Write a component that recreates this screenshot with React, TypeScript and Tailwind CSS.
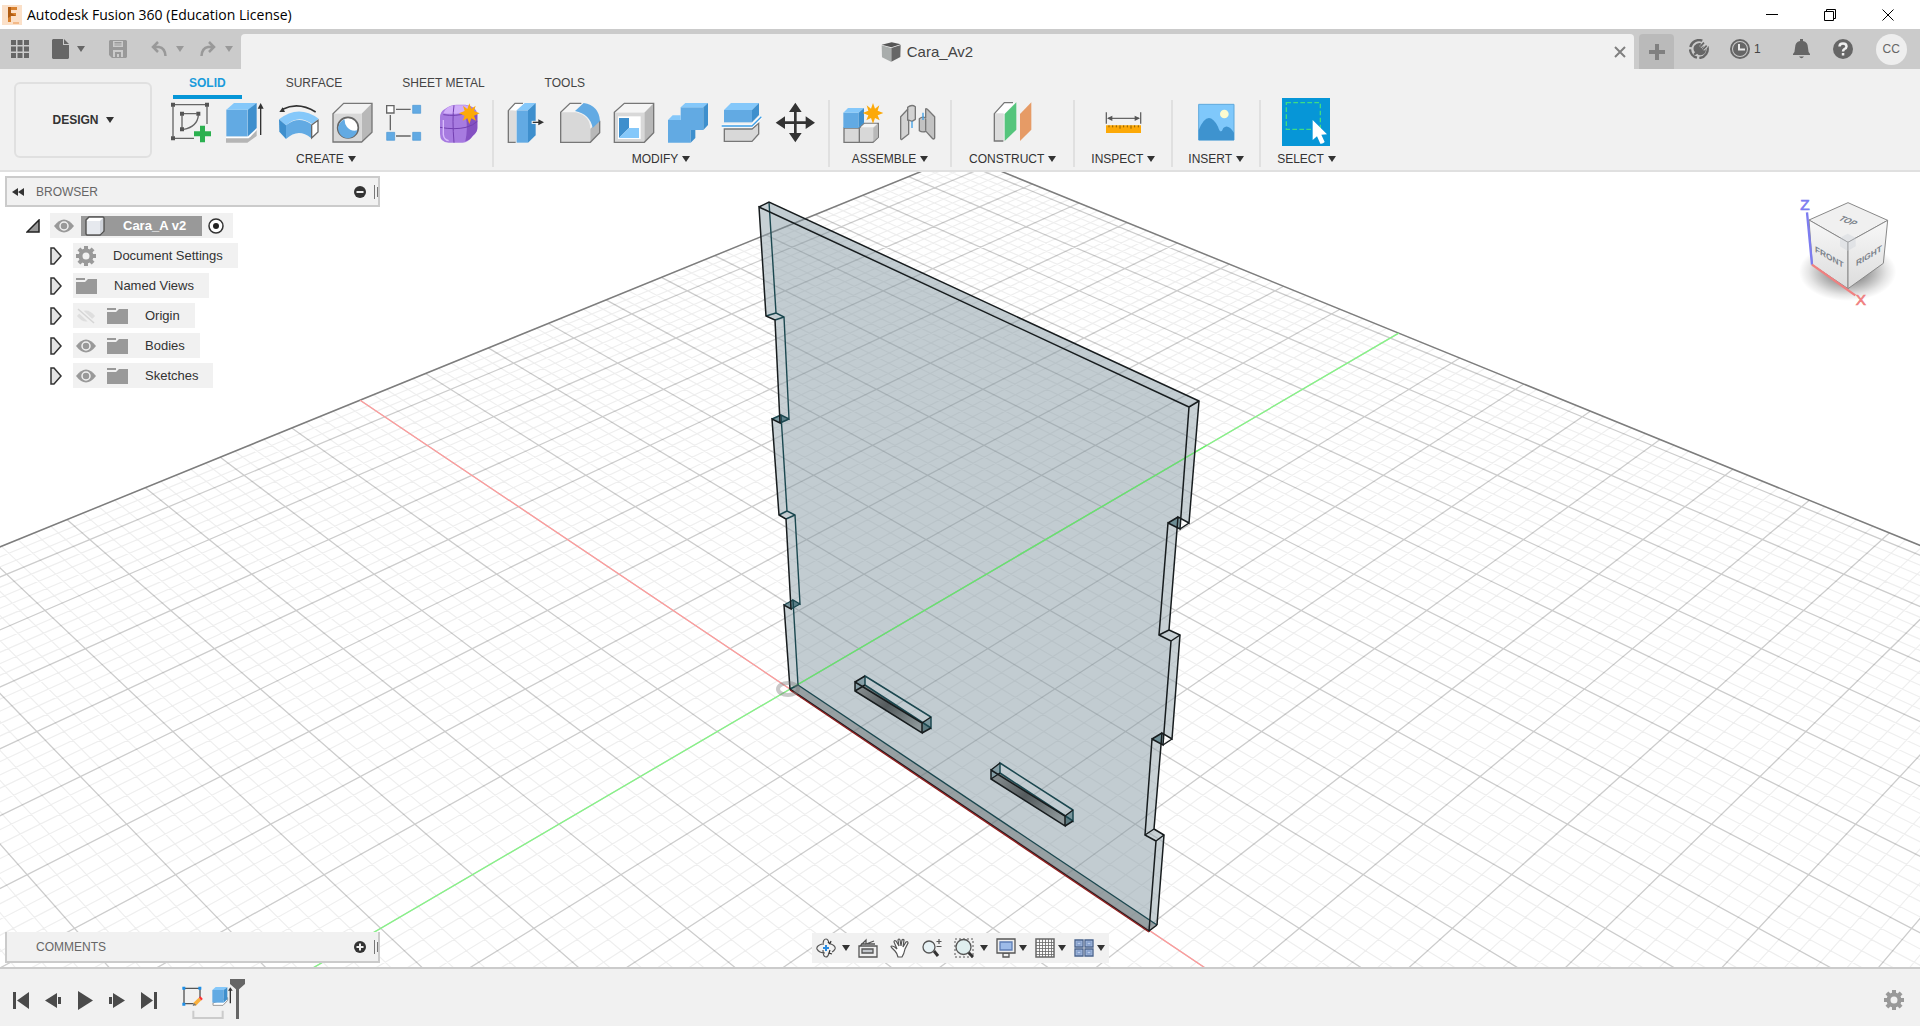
import { useState, type ReactNode } from "react";

/* ---------- small shared pieces ---------- */

function Caret({ className = "fill-[#333]" }: { className?: string }) {
  return (
    <svg width="8" height="6" viewBox="0 0 8 6" className={className} aria-hidden="true">
      <path d="M0 0h8L4 6z" />
    </svg>
  );
}

function Glyph({ box, w = 44, h = 44, children }: { box: string; w?: number; h?: number; children: ReactNode }) {
  return (
    <svg width={w} height={h} viewBox={box} className="shrink-0" aria-hidden="true">
      {children}
    </svg>
  );
}

/* ---------- ribbon icons (3 units per pixel) ---------- */

const STAR = "M0-31 6-14 19-24 14-8 31-1 14 6 20 21 6 14 0 31-6 14-20 21-14 6-31-1-14-8-19-24-6-14Z";

const createIcons = [
  {
    name: "Create Sketch",
    el: (
      <Glyph box="507 300 132 132">
        <g fill="none" stroke="#666" strokeWidth="4">
          <path d="M524 314H616M519 319V410M524 415H582M621 319V372M550 341H590M546 346V384M595 346Q592 380 551 388" />
        </g>
        <g fill="#555">
          <path d="M513 308h12v12h-12zM615 308h12v12h-12zM513 409h12v12h-12zM540 335h12v12h-12zM589 335h12v12h-12zM540 382h12v12h-12z" />
        </g>
        <path fill="#2bb04f" d="M600 377h15v17h18v15h-18v18h-15v-18h-18v-15h18z" />
      </Glyph>
    ),
  },
  {
    name: "Extrude",
    el: (
      <Glyph box="669 300 132 132">
        <path fill="#b5b5b5" d="M678 412h72l20-24v20l-28 20h-64z" />
        <path fill="#fff" d="M678 410h66l26-24v5l-24 24h-68z" />
        <path fill="#62aae3" d="M679 329h64v80h-64z" />
        <path fill="#85c8fa" d="M679 329l23-20h68l-23 20z" />
        <path fill="#3e8fcd" d="M744 329l26-20v75l-26 25z" />
        <path d="M782 405V318" stroke="#333" strokeWidth="4" />
        <path fill="#333" d="M782 309l9 17h-18z" />
      </Glyph>
    ),
  },
  {
    name: "Revolve",
    el: (
      <Glyph box="831 300 132 132">
        <path d="M848 328Q895 304 947 336" fill="none" stroke="#333" strokeWidth="5" />
        <path fill="#333" d="M838 336l10-14 7 14z" />
        <path fill="#85c8fa" d="M837 358Q895 312 956 356L936 372Q895 342 858 376Z" />
        <path fill="#3e8fcd" d="M837 358l21 18v41l-20-22z" />
        <path fill="#62aae3" d="M858 376Q895 346 933 372V414Q895 382 858 417Z" />
        <path fill="#fff" stroke="#666" strokeWidth="4" d="M935 375l19-14v35l-19 18z" />
      </Glyph>
    ),
  },
  {
    name: "Hole",
    el: (
      <Glyph box="993 300 132 132">
        <path fill="#f2f2f2" d="M999 341l32-31h85l-31 31z" />
        <path fill="#b8b8b8" d="M1085 341l31-31v87l-31 30z" />
        <path fill="#d8d8d8" d="M999 341h86v86h-86z" />
        <path fill="none" stroke="#777" strokeWidth="4" d="M999 426V341l32-31h85v87l-31 29z" />
        <circle cx="1044" cy="383" r="31" fill="#fff" stroke="#666" strokeWidth="5" />
        <path fill="#62aae3" d="M1034 358a29 29 0 1 0 38 33q-20 4-31-10-8-10-7-23z" />
      </Glyph>
    ),
  },
  {
    name: "Rectangular Pattern",
    el: (
      <Glyph box="1155 300 132 132">
        <path d="M1188 328h44M1171 345v46M1188 408h44" stroke="#666" strokeWidth="4" />
        <path fill="#fff" stroke="#666" strokeWidth="4" d="M1160 317h22v22h-22z" />
        <path fill="#62aae3" stroke="#4b97d4" strokeWidth="2" d="M1238 316h24v24h-24zM1160 397h24v24h-24zM1238 397h24v24h-24z" />
      </Glyph>
    ),
  },
  {
    name: "Create Form",
    el: (
      <Glyph box="1317 300 132 132">
        <path fill="#a77be0" d="M1320 352q0-18 16-26 16-12 34-12h26q34 4 36 30v40q0 14-14 24-14 20-30 20h-42q-26 0-26-26z" />
        <path fill="#d0adf9" d="M1330 340q8-22 36-24h30q12 2 14 10l-24 12q-30 6-56 2z" />
        <path fill="#8451c2" d="M1398 350q14-12 34-8v42q0 12-12 22-12 16-24 18 8-36 2-74z" />
        <path d="M1320 382q44 8 78 0 22-6 34-18M1362 316q-6 40 0 112M1330 344q38 6 66-4" fill="none" stroke="#7340b1" strokeWidth="3" />
        <path d="M1330 360v44q2 16 16 18" fill="none" stroke="#d9bcfb" strokeWidth="4" />
        <path d={STAR} transform="translate(1408 341)" fill="#fca908" />
      </Glyph>
    ),
  },
];

const modifyIcons = [
  {
    name: "Press Pull",
    el: (
      <Glyph box="75 120 132 132">
        <path fill="#dcdcdc" d="M88 153l24-6v100H88z" />
        <path fill="#fff" d="M90 150l20-20h28l-26 22z" />
        <path fill="none" stroke="#777" strokeWidth="4" d="M110 247H88v-95l20-22h24" />
        <path fill="#62aae3" d="M113 151h34v97h-34z" />
        <path fill="#85c8fa" d="M113 151l24-22h33l-23 22z" />
        <path fill="#3e8fcd" d="M147 151l23-22v97l-23 22z" />
        <path stroke="#fff" strokeWidth="9" d="M158 187h22" />
        <path stroke="#333" strokeWidth="4" d="M161 187h22" />
        <path fill="#333" d="M195 187l-17-9v18z" />
      </Glyph>
    ),
  },
  {
    name: "Fillet",
    el: (
      <Glyph box="237 120 132 132">
        <path fill="#f5f5f5" d="M245 158l28-28h42l-24 26z" />
        <path fill="#d8d8d8" d="M245 157h45q44 10 44 52v38h-89z" />
        <path fill="#b8b8b8" d="M334 206l28-24v36l-28 29z" />
        <path fill="none" stroke="#777" strokeWidth="4" d="M307 130h-34l-28 27v90h89l28-29v-36" />
        <path fill="#62aae3" d="M288 153l26-24q46 8 49 54l-22 21q-8-42-53-51z" />
      </Glyph>
    ),
  },
  {
    name: "Shell",
    el: (
      <Glyph box="399 120 132 132">
        <path fill="#f5f5f5" d="M406 158l30-28h88l-28 28z" />
        <path fill="#b8b8b8" d="M496 158l28-28v88l-28 29z" />
        <path fill="#d8d8d8" d="M406 158h90v89h-90z" />
        <path fill="none" stroke="#777" strokeWidth="4" d="M406 247v-90l30-27h88v88l-28 29z" />
        <path fill="#fff" d="M417 169h68v68h-68z" />
        <path fill="#3e8fcd" d="M420 174h30v30l-30 30z" />
        <path fill="#85c8fa" d="M450 204h30v30h-60z" />
      </Glyph>
    ),
  },
  {
    name: "Combine",
    el: (
      <Glyph box="561 120 132 132">
        <path fill="#62aae3" d="M567 180h38v-38h68v68h-38v38h-68z" />
        <path fill="#85c8fa" d="M567 180l14-14h24v14zM605 142l14-13h68l-14 13z" />
        <path fill="#3e8fcd" d="M673 142l14-13v66l-14 15zM635 210h14v24l-14 14z" />
      </Glyph>
    ),
  },
  {
    name: "Split Body",
    el: (
      <Glyph box="723 120 132 132">
        <path fill="#62aae3" d="M735 150h84v37h-84z" />
        <path fill="#85c8fa" d="M735 150l21-21h84l-21 21z" />
        <path fill="#3e8fcd" d="M819 150l21-21v36l-21 22z" />
        <path fill="#d8d8d8" stroke="#777" strokeWidth="4" d="M736 207v37h83l20-22v-32l-20 17z" />
        <path fill="none" stroke="#fff" strokeWidth="9" d="M728 198h91l28-28" />
        <path fill="none" stroke="#3f9fe6" strokeWidth="4" d="M728 198h91l28-28" />
      </Glyph>
    ),
  },
  {
    name: "Move/Copy",
    el: (
      <Glyph box="885 120 132 132">
        <path stroke="#333" strokeWidth="8" d="M949 145v84M907 188h84" />
        <path fill="#333" d="M949 128l19 28h-38zM949 247l19-28h-38zM890 188l28-19v38zM1008 188l-28-19v38z" />
      </Glyph>
    ),
  },
];

const assembleIcons = [
  {
    name: "New Component",
    el: (
      <Glyph box="1083 120 132 132">
        <path fill="#d8d8d8" stroke="#777" strokeWidth="4" d="M1092 204h46v43h-46zM1138 204l14-14h43v42l-16 15h-41z" />
        <path fill="#f5f5f5" d="M1142 202l12-11h38l-12 11z" />
        <path fill="#b8b8b8" d="M1180 204l13-12v40l-13 13z" />
        <path fill="#62aae3" d="M1090 158h46v46h-46z" />
        <path fill="#85c8fa" d="M1090 158l14-14h48l-16 14z" />
        <path fill="#3e8fcd" d="M1136 158l16-14v44l-16 16z" />
        <path d={STAR} transform="translate(1179 160)" fill="#fca908" />
      </Glyph>
    ),
  },
  {
    name: "Joint",
    el: (
      <Glyph box="1245 120 132 132">
        <g fill="#d3d3d3" stroke="#777" strokeWidth="4" strokeLinejoin="round">
          <path d="M1262 170l21-22v-6q12-10 23-2v38l-10 6-10-4v42l-20 16q-5 2-4-6z" />
          <path fill="#c2c2c2" d="M1318 176q10-8 19-2v-26q0-4 5 0l22 22v64q-2 6-8 0l-18-20q-12 4-20-2z" />
        </g>
        <path d="M1283 146v36M1337 176v36" stroke="#777" strokeWidth="4" />
        <path d="M1296 184v20M1329 158v22" stroke="#3f9fe6" strokeWidth="4" />
      </Glyph>
    ),
  },
];

const constructIcons = [
  {
    name: "Offset Plane",
    el: (
      <Glyph box="513 210 132 132">
        <path fill="#fff" d="M523 250l28-32h34l-32 34z" />
        <path fill="#dcdcdc" d="M523 250h28v83h-28z" />
        <path fill="none" stroke="#777" strokeWidth="4" d="M550 333h-27v-82l30-33h26" />
        <path fill="#55c57c" d="M554 252l35-35v82l-35 34z" />
        <path fill="#e69b66" d="M600 252l34-35v82l-34 34z" />
      </Glyph>
    ),
  },
];

const inspectIcons = [
  {
    name: "Measure",
    el: (
      <Glyph box="844 210 132 132">
        <path d="M860 247v34M963 247v34M866 265h92" stroke="#666" strokeWidth="4" />
        <path fill="#555" d="M862 265l16-8v16zM961 265l-16-8v16z" />
        <path fill="#fca908" d="M859 286h105v23H859z" />
        <path stroke="#8b5d00" strokeWidth="3" d="M868 286v6M879 286v6M890 286v6M901 286v10M912 286v6M923 286v6M934 286v10M945 286v6M956 286v6" />
      </Glyph>
    ),
  },
];

const insertIcons = [
  {
    name: "Insert Canvas",
    el: (
      <Glyph box="1120 210 132 132">
        <path fill="#7fc8fb" stroke="#5fa9dc" strokeWidth="3" d="M1134 223h106v107h-106z" />
        <circle cx="1211" cy="252" r="13" fill="#fdfbcf" />
        <path fill="#3e93cf" d="M1134 300q28-66 58-10 8 26 16 4 14-14 32 14v23h-106z" />
      </Glyph>
    ),
  },
];

const selectIcons = [
  {
    name: "Select",
    el: (
      <span className="flex h-12 w-12 items-center justify-center bg-[#0696d7]">
        <svg width="48" height="48" viewBox="0 0 144 144" aria-hidden="true">
          <path d="M13 14h102v80H13z" fill="none" stroke="#3fdc84" strokeWidth="4" strokeDasharray="14 7" />
          <path fill="#fff" d="M92 66v60l13-11 10 22q8 1 13-5l-10-22 17-1z" />
        </svg>
      </span>
    ),
  },
];

const GROUPS = [
  { label: "CREATE", icons: createIcons, pad: "px-1" },
  { label: "MODIFY", icons: modifyIcons, pad: "px-[5px]" },
  { label: "ASSEMBLE", icons: assembleIcons, pad: "px-[6px]" },
  { label: "CONSTRUCT", icons: constructIcons, pad: "px-[17px]" },
  { label: "INSPECT", icons: inspectIcons, pad: "px-4" },
  { label: "INSERT", icons: insertIcons, pad: "px-[15px]" },
  { label: "SELECT", icons: selectIcons, pad: "px-4" },
];

const TABS = ["SOLID", "SURFACE", "SHEET METAL", "TOOLS"];

/* ---------- header ---------- */

function TitleBar() {
  return (
    <header className="flex h-[29px] items-center bg-white">
      <div className="flex flex-1 items-center gap-[5px] pl-[2px]">
        <svg width="20" height="20" viewBox="0 0 20 20" aria-hidden="true">
          <path fill="#fbe0c8" d="M0 0h20v20H0z" />
          <path fill="#d9822f" d="M6 2h9v3H9v3h5v3H9v6H6z" />
          <path fill="#b05c12" d="M6 2h3v9l-3 2zM9 8l5 3H9z" />
          <path fill="#f3b988" d="M11 17h6v2h-6z" />
        </svg>
        <h1 className="font-['Open_Sans',sans-serif] text-[14px] leading-5 text-black">
          Autodesk Fusion 360 (Education License)
        </h1>
      </div>
      <div className="flex gap-[34px] pr-[20px]">
        {[
          { name: "Minimize", d: "M6 9.5h12" },
          { name: "Restore", d: "M6.500 6.500h9v9h-9zM8.500 6V4.500h9v9H16" },
          { name: "Close", d: "M6.500 4.500l11 11M17.500 4.500l-11 11" },
        ].map((b) => (
          <button key={b.name} aria-label={b.name} className="h-5 w-6">
            <svg width="24" height="20" viewBox="0 0 24 20" fill="none" stroke="#000" aria-hidden="true">
              <path d={b.d} />
            </svg>
          </button>
        ))}
      </div>
    </header>
  );
}

function QuickBar() {
  return (
    <div className="flex h-10 bg-[#cbcbcb]">
      <div className="flex w-[241px] shrink-0 items-center pl-[11px]">
        <button aria-label="Data panel" className="mr-[23px]">
          <svg width="18" height="18" viewBox="0 0 18 18" fill="#666" aria-hidden="true">
            <path d="M0 0h5v5H0zM6.500 0h5v5h-5zM13 0h5v5h-5zM0 6.500h5v5H0zM6.500 6.500h5v5h-5zM13 6.500h5v5h-5zM0 13h5v5H0zM6.500 13h5v5h-5zM13 13h5v5h-5z" />
          </svg>
        </button>
        <button aria-label="File" className="mr-6 flex items-center gap-2">
          <svg width="17" height="20" viewBox="0 0 17 20" fill="#666" aria-hidden="true">
            <path d="M1 0h10v6h6v13l-1 1H1l-1-1V1zM12 0l5 5h-5z" />
          </svg>
          <Caret className="fill-[#666]" />
        </button>
        <button aria-label="Save" className="mr-6">
          <svg width="18" height="18" viewBox="0 0 18 18" fill="#999" aria-hidden="true">
            <path fillRule="evenodd" d="M1 0h16l1 1v16l-1 1H3l-3-3V1zM4 1v6h10V1zM4 10v7h10v-7z" />
            <path d="M5.500 2h7v1.500h-7zM5.500 4.500h7v1h-7zM6 12h6v5h-2v-3H8v3H6z" />
          </svg>
        </button>
        <button aria-label="Undo" className="mr-4 flex items-center gap-[9px]">
          <svg width="16" height="16" viewBox="0 0 16 16" fill="none" stroke="#999" strokeWidth="2.500" aria-hidden="true">
            <path d="M7 1L2 6l5 5M2 6h6q6 1 6.500 9" />
          </svg>
          <Caret className="fill-[#999]" />
        </button>
        <button aria-label="Redo" className="flex items-center gap-[9px]">
          <svg width="16" height="16" viewBox="0 0 16 16" fill="none" stroke="#999" strokeWidth="2.500" aria-hidden="true">
            <path d="M9 1l5 5-5 5M14 6H8Q2 7 1.500 15" />
          </svg>
          <Caret className="fill-[#999]" />
        </button>
      </div>

      <div className="mt-[5px] flex flex-1 items-center rounded-t bg-[#f1f1f1] pr-[7px]">
        <div className="flex flex-1 items-center justify-center gap-[6px]">
          <svg width="20" height="20" viewBox="0 0 60 60" aria-hidden="true">
            <path fill="#555" d="M2 8L32 1l27 6-28 9z" />
            <path fill="#a9adac" d="M2 10l28 8v41L3 46z" />
            <path fill="#666" d="M31 18L59 9l-1 36-27 14z" />
          </svg>
          <span className="text-[15px] leading-5 text-[#444]">Cara_Av2</span>
        </div>
        <button aria-label="Close document" className="p-px">
          <svg width="12" height="12" viewBox="0 0 12 12" stroke="#808080" strokeWidth="2" aria-hidden="true">
            <path d="M1 1l10 10M11 1L1 11" />
          </svg>
        </button>
      </div>

      <button aria-label="New document" className="mt-[5px] ml-[5px] flex w-[35px] items-center justify-center rounded-t bg-[#bababa]">
        <svg width="16" height="16" viewBox="0 0 16 16" fill="#808080" aria-hidden="true">
          <path d="M6 0h4v6h6v4h-6v6H6v-6H0V6h6z" />
        </svg>
      </button>

      <div className="flex w-[246px] shrink-0 items-center pl-[15px]">
        <button aria-label="Extensions" className="mr-[21px]">
          <svg width="20" height="20" viewBox="0 0 60 60" aria-hidden="true">
            <path d="M40 5A27 27 0 0 0 4 24M3 31A27 27 0 0 0 24 56M31 57A27 27 0 0 0 55 22" fill="none" stroke="#666" strokeWidth="7" />
            <path fill="#666" d="M16 20q8-10 18-8l16 18q2 10-6 16-12 6-20-2-2 4-8 4l-2-4 4-4q-8-10-2-20z" />
            <path d="M34 24l12-13M42 32L55 20" stroke="#cbcbcb" strokeWidth="9" />
            <path d="M34 23l11-12M42 31L53 20" stroke="#666" strokeWidth="5" />
          </svg>
        </button>
        <button aria-label="Job status: 1" className="mr-8 flex items-center gap-1 text-[12px] leading-5 text-[#444]">
          <svg width="20" height="20" viewBox="0 0 20 20" aria-hidden="true">
            <circle cx="10" cy="10" r="9" fill="none" stroke="#666" strokeWidth="2" />
            <circle cx="10" cy="10" r="7" fill="#666" />
            <path d="M9 5v5.500h6" fill="none" stroke="#e8e8e8" strokeWidth="2" />
          </svg>
          1
        </button>
        <button aria-label="Notifications" className="mr-[23px]">
          <svg width="17" height="20" viewBox="0 0 17 20" fill="#666" aria-hidden="true">
            <path d="M7 0h3v2q5 1 5 7 0 4 2 6v1H0v-1q2-2 2-6 0-6 5-7zM6 17.500h5q-2.500 3.500-5 0z" />
          </svg>
        </button>
        <button aria-label="Help" className="mr-[23px]">
          <svg width="20" height="20" viewBox="0 0 20 20" aria-hidden="true">
            <circle cx="10" cy="10" r="10" fill="#666" />
            <path d="M6.500 7.500Q6.500 4.500 10 4.500t3.500 3q0 1.500-2 2.500-1.500 1-1.500 2.500" fill="none" stroke="#eee" strokeWidth="2.500" />
            <path fill="#eee" d="M8.800 14h2.500v2.500H8.800z" />
          </svg>
        </button>
        <button aria-label="Account CC" className="flex h-[31px] w-[31px] items-center justify-center rounded-full bg-[#eee] text-[12px] leading-4 text-[#666]">
          CC
        </button>
      </div>
    </div>
  );
}

function Ribbon() {
  const [active, setActive] = useState("SOLID");
  return (
    <div className="flex h-[103px] border-b-2 border-[#e0e0e0] bg-[#f1f1f1]">
      <button className="mt-[13px] ml-[14px] flex h-[76px] w-[138px] shrink-0 items-center justify-center gap-[7px] rounded-md border-2 border-[#e0e0e0] text-[12px] font-bold leading-4 text-[#333]">
        DESIGN <Caret />
      </button>
      <div className="ml-2 min-w-0 flex-1">
        <nav className="flex gap-7 pl-[13px]">
          {TABS.map((t) => (
            <button
              key={t}
              onClick={() => setActive(t)}
              className={`h-[30px] border-b-4 px-4 pt-[2px] text-[12px] leading-4 ${
                active === t ? "border-[#0696d7] font-bold text-[#1a9bdb]" : "border-transparent text-[#444]"
              }`}
            >
              {t}
            </button>
          ))}
        </nav>
        <div className="flex divide-x-2 divide-[#e0e0e0] pt-px">
          {GROUPS.map((g) => (
            <section key={g.label} className={`flex h-[67px] flex-col items-center justify-between ${g.pad}`}>
              <div className="flex h-11">
                {g.icons.map((i) => (
                  <button key={i.name} aria-label={i.name} className="flex h-11 w-[54px] items-center justify-center">
                    {i.el}
                  </button>
                ))}
              </div>
              <button className="flex items-center gap-1 text-[12px] leading-4 text-[#333]">
                {g.label} <Caret />
              </button>
            </section>
          ))}
        </div>
      </div>
    </div>
  );
}

/* ---------- viewport scene ---------- */

// Ground plane (u, v) in major grid cells to canvas pixels.
function project(u: number, v: number): string {
  const d = u - v;
  const s = u + v;
  const w = 1 - 0.02703 * d;
  const x = (790 + 66.2 * s - 25.95 * d) / w;
  const y = (689 + 22.77 * d) / w;
  return `${x.toFixed(1)} ${y.toFixed(1)}`;
}

const U_MIN = -43; // grid bounds in fifths of a cell
const V_MAX = 56;

function gridPath(major: boolean): string {
  let d = "";
  for (let i = U_MIN; i <= 90; i++) {
    if ((i % 5 === 0) !== major) continue;
    const u = i / 5;
    d += `M${project(u, Math.max(u - 7, -20))}L${project(u, V_MAX / 5)}`;
  }
  for (let i = -80; i <= V_MAX; i++) {
    if ((i % 5 === 0) !== major) continue;
    const v = i / 5;
    d += `M${project(U_MIN / 5, v)}L${project(v + 7, v)}`;
  }
  return d;
}

const MINOR = gridPath(false);
const MAJOR = gridPath(true);
const BORDER = `M${project(U_MIN / 5, -15.6)}L${project(U_MIN / 5, V_MAX / 5)}L${project(18, V_MAX / 5)}`;

type Pt = [number, number];

// left and right silhouettes of the plate, front skin and back skin, top to bottom
const LEFT_F: Pt[] = [[759, 207], [766, 316], [775, 320], [780, 423], [772, 419], [779, 515], [786, 519], [791, 609], [784, 605], [790, 689]];
const LEFT_B: Pt[] = [[769, 202], [776, 313], [784, 317], [789, 419], [781, 415], [787, 511], [795, 515], [800, 604], [793, 600], [798, 685]];
const RIGHT_F: Pt[] = [[1189, 407], [1180, 529], [1168, 523], [1159, 635], [1171, 641], [1163, 745], [1152, 739], [1145, 835], [1156, 841], [1149, 931]];
const RIGHT_B: Pt[] = [[1199, 401], [1189, 523], [1178, 517], [1169, 630], [1180, 635], [1172, 739], [1162, 733], [1154, 829], [1164, 835], [1157, 925]];

// slots: front corners then back corners, clockwise from top left
const SLOTS: { f: Pt[]; b: Pt[] }[] = [
  {
    f: [[855, 682], [922, 723], [922, 733], [855, 691]],
    b: [[865, 676], [931, 717], [931, 728], [865, 685]],
  },
  {
    f: [[991, 770], [1065, 816], [1065, 826], [991, 779]],
    b: [[1000, 763], [1073, 810], [1073, 821], [1000, 773]],
  },
];

const pts = (p: Pt[]) => p.map((q) => q.join(",")).join(" ");

function Walls({ f, b, dark }: { f: Pt[]; b: Pt[]; dark: number[] }) {
  return (
    <>
      {f.slice(1).map((_, i) => (
        <polygon
          key={i}
          points={pts([f[i], f[i + 1], b[i + 1], b[i]])}
          fill={dark.includes(i) ? "#2d5d68" : "#ffffff"}
          fillOpacity={dark.includes(i) ? 0.7 : 0.1}
        />
      ))}
    </>
  );
}

function Scene() {
  const front = [...LEFT_F, ...[...RIGHT_F].reverse()];
  const hull: Pt[] = [
    LEFT_B[0], ...RIGHT_B, RIGHT_F[9], LEFT_F[9], LEFT_F[8], LEFT_F[7], LEFT_F[6], LEFT_F[5], LEFT_F[4], LEFT_F[3], LEFT_F[2], LEFT_F[1], LEFT_F[0],
  ];
  const rungs = (f: Pt[], b: Pt[]) => f.map((p, i) => `M${p.join(" ")}L${b[i].join(" ")}`).join("");
  return (
    <svg viewBox="0 172 1920 795" preserveAspectRatio="xMidYMid slice" className="absolute inset-0 h-full w-full" role="img" aria-label="Model view">
      <defs>
        <linearGradient id="slotFloor" x1="0" y1="0" x2="1" y2="0.6">
          <stop offset="0" stopColor="#8d9496" />
          <stop offset="0.5" stopColor="#555b5d" />
          <stop offset="1" stopColor="#8d9799" />
        </linearGradient>
      </defs>
      <path d={MINOR} stroke="#000" strokeOpacity="0.065" strokeWidth="1.200" fill="none" />
      <path d={MAJOR} stroke="#000" strokeOpacity="0.2" strokeWidth="1.300" fill="none" />
      <path d={BORDER} stroke="#7d7d7d" strokeWidth="1.500" fill="none" />
      <path d={`M${project(U_MIN / 5, 0)}L${project(7, 0)}`} stroke="#ff9a9a" strokeWidth="1.300" />
      <path d={`M${project(0, -7)}L${project(0, V_MAX / 5)}`} stroke="#85f585" strokeWidth="1.300" />

      <polygon points={pts(hull)} fill="#80949e" fillOpacity="0.48" />
      <Walls f={LEFT_F} b={LEFT_B} dark={[3, 7]} />
      <Walls f={RIGHT_F} b={RIGHT_B} dark={[]} />
      <polygon points={pts([RIGHT_F[2], RIGHT_B[2], [1180, 519], RIGHT_F[1]])} fill="#2d5d68" fillOpacity="0.6" />
      <polygon points={pts([RIGHT_F[6], RIGHT_B[6], [1164, 734], RIGHT_F[5]])} fill="#2d5d68" fillOpacity="0.6" />
      <polygon points={pts([LEFT_F[9], LEFT_B[9], RIGHT_B[9], RIGHT_F[9]])} fill="#6b7476" fillOpacity="0.5" />
      <path d={`M${project(0, 0)}L${project(0, 7)}`} stroke="#5cf05c" strokeOpacity="0.700" strokeWidth="1.300" />

      <g fill="none" stroke="#1b474f" strokeWidth="1.400">
        <polyline points={pts(LEFT_B)} />
        <path d={`M${LEFT_B[9].join(" ")}L${RIGHT_B[9].join(" ")}`} />
        <path d={rungs(LEFT_F.slice(1), LEFT_B.slice(1))} />
      </g>
      <g fill="none" stroke="#171c1e" strokeWidth="1.500">
        <polygon points={pts(front)} />
        <polyline points={pts([LEFT_F[0], LEFT_B[0], ...RIGHT_B])} />
        <path d={rungs(RIGHT_F, RIGHT_B)} />
      </g>
      <path d="M790 690L1149 932" stroke="#8f1f1f" strokeWidth="1.400" />

      {SLOTS.map((s, i) => (
        <g key={i} strokeWidth="1.500" fill="none">
          <polygon points={pts([s.f[3], s.b[3], s.b[2], s.f[2]])} fill="url(#slotFloor)" />
          <polygon points={pts([s.f[0], s.b[0], s.b[3], s.f[3]])} fill="#2d5d68" fillOpacity="0.4" />
          <polygon points={pts([s.f[1], s.b[1], s.b[2], s.f[2]])} fill="#2d5d68" fillOpacity="0.5" />
          <polygon points={pts(s.b)} stroke="#1b474f" />
          <polygon points={pts(s.f)} stroke="#171c1e" />
          <path d={rungs(s.f, s.b)} stroke="#171c1e" />
        </g>
      ))}

      <ellipse cx="788" cy="689" rx="10" ry="6" fill="none" stroke="#777" strokeOpacity="0.400" strokeWidth="4" />
    </svg>
  );
}

function ViewCube() {
  return (
    <svg width="110" height="117" viewBox="700 580 330 351" className="absolute top-[21px] right-[17px]" role="img" aria-label="View cube">
      <defs>
        <radialGradient id="cubeShadow">
          <stop offset="0.3" stopColor="#000" stopOpacity="0.45" />
          <stop offset="0.8" stopColor="#000" stopOpacity="0.1" />
          <stop offset="1" stopColor="#000" stopOpacity="0" />
        </radialGradient>
        <linearGradient id="cubeSide" x1="0" y1="0" x2="0" y2="1">
          <stop offset="0" stopColor="#f8f8f8" />
          <stop offset="1" stopColor="#dcdcdc" />
        </linearGradient>
      </defs>
      <ellipse cx="864" cy="816" rx="146" ry="88" fill="url(#cubeShadow)" />
      <g stroke="#888" strokeWidth="3" strokeLinejoin="round">
        <path fill="#f0f0f0" d="M748 661l117-52 119 53-119 66z" />
        <path fill="url(#cubeSide)" d="M748 661l117 67v139l-107-72z" />
        <path fill="url(#cubeSide)" d="M984 662l-119 66v139l106-76z" />
      </g>
      <path fill="#cdd2da" fillOpacity="0.4" d="M841 714l23-12 24 12v26l-24 14-23-14z" />
      <path d="M742 638l15 157" stroke="#7c7cf0" strokeWidth="7" />
      <path d="M757 795l130 92" stroke="#f08080" strokeWidth="7" />
      <g className="font-['Liberation_Sans',sans-serif] font-bold" fill="#7b828b" fontSize="25">
        <text transform="translate(766 756) skewY(30)">FRONT</text>
        <text transform="translate(889 800) skewY(-31)">RIGHT</text>
        <text transform="translate(834 660) rotate(22) skewX(-30)">TOP</text>
      </g>
      <g className="font-['Liberation_Sans',sans-serif]" fontSize="46" strokeWidth="2">
        <text x="722" y="630" fill="#7c7cf0" stroke="#7c7cf0">Z</text>
        <text x="888" y="916" fill="#f08080" stroke="#f08080">X</text>
      </g>
    </svg>
  );
}

/* ---------- browser tree ---------- */

function Eye({ off = false }: { off?: boolean }) {
  if (off)
    return (
      <svg width="20" height="16" viewBox="0 0 20 16" aria-hidden="true">
        <path d="M1 8Q10-3 19 8 10 19 1 8z" fill="#dedede" />
        <path d="M1 0l17 16" stroke="#f1f1f1" strokeWidth="5" />
        <path d="M2 1l16 14" stroke="#d5d5d5" strokeWidth="1.500" />
      </svg>
    );
  return (
    <svg width="20" height="14" viewBox="0 0 20 14" aria-hidden="true">
      <path d="M0 7Q10-6 20 7 10 20 0 7z" fill="#999" />
      <circle cx="10" cy="7" r="4" fill="#999" stroke="#f1f1f1" strokeWidth="1.500" />
    </svg>
  );
}

function Folder() {
  return (
    <svg width="21" height="16" viewBox="0 0 21 16" fill="#999" aria-hidden="true">
      <path d="M0 0h9v2H0zM0 4h9l3-3h9v15H0z" />
    </svg>
  );
}

const TEETH = [0, 45, 90, 135, 180, 225, 270, 315];

function Gear({ color }: { color: string }) {
  return (
    <svg width="20" height="20" viewBox="-10 -10 20 20" aria-hidden="true">
      {TEETH.map((a) => (
        <path key={a} d="M-2-10h4v5h-4z" fill={color} transform={`rotate(${a})`} />
      ))}
      <circle r="5.500" fill="none" stroke={color} strokeWidth="4" />
    </svg>
  );
}

const NODES = [
  { label: "Document Settings", icons: <Gear color="#999" /> },
  { label: "Named Views", icons: <Folder /> },
  { label: "Origin", icons: <><Eye off /><Folder /></> },
  { label: "Bodies", icons: <><Eye /><Folder /></> },
  { label: "Sketches", icons: <><Eye /><Folder /></> },
];

function PanelEnd({ plus = false }: { plus?: boolean }) {
  return (
    <>
      <button aria-label={plus ? "Expand" : "Collapse"} className="mr-2">
        <svg width="12" height="12" viewBox="0 0 12 12" aria-hidden="true">
          <circle cx="6" cy="6" r="6" fill="#333" />
          <path d={plus ? "M2.500 6h7M6 2.500v7" : "M2.500 6h7"} stroke="#f1f1f1" strokeWidth="2" />
        </svg>
      </button>
      <svg width="4" height="14" viewBox="0 0 4 14" stroke="#777" aria-hidden="true">
        <path d="M.5 0v14M3.500 2v10" />
      </svg>
    </>
  );
}

function Browser() {
  return (
    <aside className="w-[375px]">
      <div className="flex h-[31px] items-center border-2 border-[#cbcbcb] bg-[#f1f1f1] pl-[5px]">
        <svg width="12" height="8" viewBox="0 0 12 8" fill="#333" aria-hidden="true">
          <path d="M6 0v8L0 4zM12 0v8L6 4z" />
        </svg>
        <h2 className="flex-1 pl-3 text-[12px] leading-4 text-[#666]">BROWSER</h2>
        <PanelEnd />
      </div>
      <ul className="mt-[6px] flex flex-col gap-[5px] pl-[21px] text-[13px] leading-4 text-[#333]">
        <li className="flex h-[25px] items-center gap-[10px]">
          <button aria-label="Collapse Cara_A v2">
            <svg width="14" height="14" viewBox="0 0 14 14" aria-hidden="true">
              <path d="M13 1v12H1z" fill="#999" stroke="#222" strokeWidth="1.500" />
            </svg>
          </button>
          <div className="flex h-full items-center bg-[#f1f1f1] pr-[9px] pl-1">
            <Eye />
            <span className="ml-[7px] flex h-5 items-center bg-[#999] pr-4 pl-1 font-bold text-white">
              <svg width="20" height="20" viewBox="0 0 20 20" stroke="#555" strokeWidth="1.500" strokeLinejoin="round" aria-hidden="true">
                <path fill="#fff" d="M1 4l3-3h14l1 1v13l-4 4H2l-1-1z" />
                <path fill="#cfd3da" stroke="none" d="M15 5l3-3v13l-3 3z" />
                <path fill="#e6e9ee" stroke="none" d="M2 5h13v13H2z" />
              </svg>
              <span className="ml-[18px]">Cara_A v2</span>
            </span>
            <input type="radio" name="active" defaultChecked aria-label="Activate Cara_A v2" className="peer sr-only" />
            <svg width="16" height="16" viewBox="0 0 16 16" className="ml-[6px]" aria-hidden="true">
              <circle cx="8" cy="8" r="7" fill="#fff" stroke="#333" strokeWidth="1.500" />
              <circle cx="8" cy="8" r="3" fill="#222" />
            </svg>
          </div>
        </li>
        {NODES.map((n) => (
          <li key={n.label} className="flex h-[25px] items-center gap-[10px] pl-6">
            <button aria-label={`Expand ${n.label}`}>
              <svg width="13" height="18" viewBox="0 0 13 18" aria-hidden="true">
                <path d="M1 1h3l7 8-7 8H1z" fill="#e4e4e4" stroke="#333" strokeWidth="1.500" />
              </svg>
            </button>
            <div className="flex h-full items-center bg-[#f1f1f1] pr-[15px] pl-[3px]">
              <span className="flex items-center gap-[11px]">{n.icons}</span>
              <span className="ml-[17px]">{n.label}</span>
            </div>
          </li>
        ))}
      </ul>
    </aside>
  );
}

/* ---------- navigation bar ---------- */

const PLAIN = "mr-3";
const MENU = "mr-2 gap-[3px]";
const WIDE_MENU = "mr-2 gap-[6px]";

const NAV = [
  {
    name: "Orbit",
    kind: WIDE_MENU,
    el: (
      <g fill="none" stroke="#555" strokeWidth="1.200">
        <path d="M6 6Q0 8 1 11q2 4 8 4M15 6q5 2 4 5-1 2-3 3M7 7q0-6 3-6 2 0 3 4M7 12q0 7 3 7 2 0 3-4" />
        <path d="M10 7v6M7 10h6" stroke="#2a8be0" strokeWidth="2" />
        <path d="M12 4l2 2 1-3M14 12l-1 3 3 1" stroke="#333" />
      </g>
    ),
  },
  {
    name: "Look At",
    kind: PLAIN,
    el: (
      <g fill="#eee" stroke="#555" strokeWidth="1.300">
        <path d="M1 8h18v11H1zM2 8l6-6v4l8-3M3 6h14" />
        <path fill="#c3c7cc" d="M4 11h11v4H4z" />
      </g>
    ),
  },
  {
    name: "Pan",
    kind: PLAIN,
    el: (
      <path
        fill="#fff"
        stroke="#555"
        strokeWidth="1.200"
        d="M5 13L2 10q-2-2 0-2t5 3L4 4q0-2 2-1l3 5-1-6q1-2 2 0l1 6 1-6q1-1 2 0l-1 7 3-5q2-1 2 1l-3 6q-1 5-3 8H8q-1-4-3-6z"
      />
    ),
  },
  {
    name: "Zoom",
    kind: PLAIN,
    el: (
      <g fill="none" stroke="#555">
        <path d="M12 13l4 5" stroke="#333" strokeWidth="3" />
        <circle cx="7" cy="9" r="6" fill="#e6f1f4" strokeWidth="1.300" />
        <path d="M17 1v5M14.500 3.500h5M14.500 8.500h5" strokeWidth="1.200" />
      </g>
    ),
  },
  {
    name: "Zoom Window",
    kind: WIDE_MENU,
    el: (
      <g fill="none" stroke="#555">
        <path d="M1 1h18v18H1z" strokeDasharray="2 2" />
        <path d="M14 14l5 5" stroke="#333" strokeWidth="3" />
        <circle cx="9.500" cy="9" r="7.500" fill="#dfeeee" strokeWidth="1.300" />
      </g>
    ),
  },
  {
    name: "Display Settings",
    kind: MENU,
    el: (
      <g fill="#eee" stroke="#555" strokeWidth="1.300">
        <path d="M7 15h6v4H7z" />
        <path d="M1 1h18v14H1z" />
        <path fill="#9dbbe8" stroke="#5d7db5" d="M4 4h12v8H4z" />
      </g>
    ),
  },
  {
    name: "Grid and Snaps",
    kind: MENU,
    el: (
      <g fill="#fafafa" stroke="#666">
        <path strokeWidth="1.500" d="M1 1h18v18H1z" />
        <path d="M4.500 1v18M7.500 1v18M10.500 1v18M13.500 1v18M16.500 1v18M1 4.500h18M1 7.500h18M1 10.500h18M1 13.500h18M1 16.500h18" strokeWidth=".8" />
      </g>
    ),
  },
  {
    name: "Viewports",
    kind: "gap-[3px]",
    el: (
      <g fill="#b9cbe8" stroke="#47618c" strokeWidth="1.300">
        <path d="M1 2h8v7H1zM11 2h8v7h-8zM1 11h8v7H1zM11 11h8v7h-8z" />
        <path fill="none" stroke="#7f9bc9" d="M3 4h4v3H3zM13 4h4v3h-4zM3 13h4v3H3zM13 13h4v3h-4z" />
      </g>
    ),
  },
];

function NavBar() {
  return (
    <div className="flex h-[30px] items-center bg-[#f1f1f1] px-1">
      {NAV.map((n) => (
        <button key={n.name} aria-label={n.name} className={`flex items-center ${n.kind}`}>
          <svg width="20" height="20" viewBox="0 0 20 20" aria-hidden="true">
            {n.el}
          </svg>
          {n.kind !== PLAIN && <Caret />}
        </button>
      ))}
    </div>
  );
}

/* ---------- timeline ---------- */

const PLAYBACK = [
  { name: "Go to start", d: "M0 1h3v17H0zM16 1v17L4 9.500z" },
  { name: "Step back", d: "M12 2v15L0 9.500zM13 6h3v7h-3z" },
  { name: "Play", d: "M1 0l15 9.500L1 19z" },
  { name: "Step forward", d: "M4 2v15l12-7.500zM0 6h3v7H0z" },
  { name: "Go to end", d: "M0 1v17l12-8.500zM13 1h3v17h-3z" },
];

function Timeline() {
  return (
    <footer className="flex h-[59px] shrink-0 items-center border-t-2 border-[#cbcbcb] bg-[#f1f1f1] pt-[5px] pr-4 pl-[13px]">
      <div className="flex gap-4">
        {PLAYBACK.map((p) => (
          <button key={p.name} aria-label={p.name}>
            <svg width="16" height="19" viewBox="0 0 16 19" fill="#4a4a4a" aria-hidden="true">
              <path d={p.d} />
            </svg>
          </button>
        ))}
      </div>
      <div className="ml-[23px] flex-1">
        <svg width="66" height="44" viewBox="540 210 198 132" aria-hidden="true">
          <path d="M552 241h48M552 241v46h28M600 241v30" fill="none" stroke="#555" strokeWidth="4" />
          <path fill="#1d8fe8" d="M547 236h9v9h-9zM595 236h9v9h-9zM547 284h9v9h-9z" />
          <path d="M583 290l17-17" stroke="#fbb03b" strokeWidth="11" />
          <path d="M600 273l5-4" stroke="#f33" strokeWidth="11" />
          <path fill="#777" d="M578 294l3-10 8 7z" />
          <path fill="#fff" stroke="#999" strokeWidth="3" d="M639 285v7h30l14-15v-8z" />
          <path fill="#62aae3" d="M637 246h34v38h-34z" />
          <path fill="#85c8fa" d="M637 246l10-9h34l-10 9z" />
          <path fill="#3e8fcd" d="M671 246l11-9v37l-11 10z" />
          <path d="M691 286v-42" stroke="#333" strokeWidth="4" />
          <path fill="#333" d="M684 248l7-10 7 10z" />
          <path d="M580 308v22h88v-22" fill="none" stroke="#cbcbcb" strokeWidth="6" />
          <path fill="#666" d="M690 213h45v15l-18 16v89h-9v-89l-18-16z" />
        </svg>
      </div>
      <button aria-label="Timeline settings">
        <Gear color="#999" />
      </button>
    </footer>
  );
}

export default function App() {
  return (
    <div className="flex h-screen flex-col overflow-hidden bg-white font-['Liberation_Sans',Arial,sans-serif]">
      <TitleBar />
      <QuickBar />
      <Ribbon />
      <main className="relative min-h-0 flex-1 overflow-hidden bg-white">
        <Scene />
        <ViewCube />
        <div className="relative flex h-full flex-col justify-between p-1 pl-[5px]">
          <Browser />
          <div className="grid grid-cols-[1fr_auto_1fr] items-end">
            <div className="flex h-[31px] w-[375px] items-center border-2 border-t-0 border-[#cbcbcb] bg-[#f1f1f1] pl-[29px]">
              <h2 className="flex-1 text-[12px] leading-4 text-[#666]">COMMENTS</h2>
              <PanelEnd plus />
            </div>
            <NavBar />
          </div>
        </div>
      </main>
      <Timeline />
    </div>
  );
}
